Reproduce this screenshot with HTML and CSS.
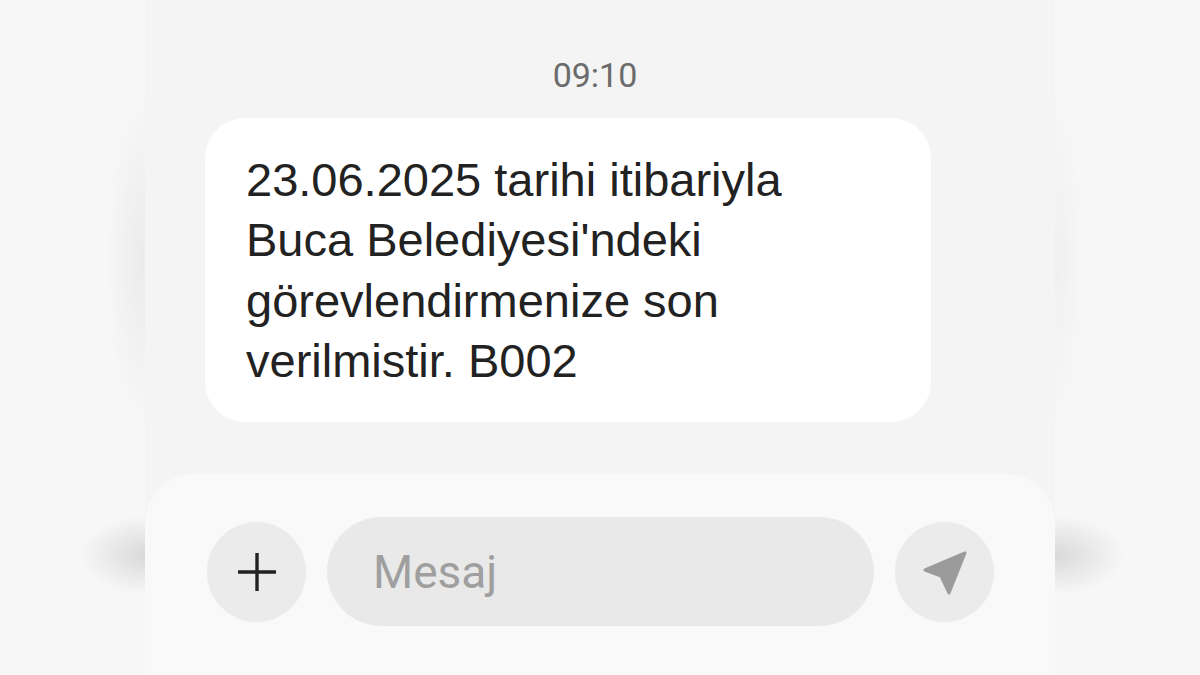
FILE: index.html
```html
<!DOCTYPE html>
<html lang="tr">
<head>
    <meta charset="UTF-8">
    <meta name="viewport" content="width=device-width, initial-scale=1.0">
    <title>Mesaj</title>
    <link rel="stylesheet" href="styles.css">
</head>
<body>
    <div class="frame">
        <div class="side side-left"></div>

        <div class="phone">
            <div class="time">09:10</div>

            <div class="bubble">
                <p>23.06.2025 tarihi itibariyla<br>
                Buca Belediyesi'ndeki<br>
                görevlendirmenize son<br>
                verilmistir. B002</p>
            </div>

            <div class="composer">
                <button class="round plus" type="button">
                    <svg width="44" height="44" viewBox="0 0 44 44">
                        <path d="M22 3v38M3 22h38" stroke="#222" stroke-width="3.4" fill="none"/>
                    </svg>
                </button>
                <div class="input">Mesaj</div>
                <button class="round send" type="button">
                    <svg width="46" height="46" viewBox="0 0 46 46">
                        <polygon points="43,4 3,21 19,27 27,44" fill="#9b9b9b" stroke="#9b9b9b" stroke-width="3" stroke-linejoin="round"/>
                    </svg>
                </button>
            </div>
        </div>

        <div class="side side-right"></div>
    </div>
</body>
</html>
```

FILE: styles.css
```css
body {
    margin: 0;
    background: #f6f6f6;
    font-family: Roboto, "Liberation Sans", sans-serif;
}

.frame {
    display: flex;
    width: 1200px;
    height: 675px;
    overflow: hidden;
}

.side {
    width: 145px;
    flex-shrink: 0;
    background-color: #f7f7f7;
}
.side-left {
    background-image:
        radial-gradient(ellipse 70px 40px at 150px 555px, rgba(0,0,0,0.13), transparent),
        radial-gradient(ellipse 40px 170px at 145px 260px, rgba(0,0,0,0.05), transparent);
}
.side-right {
    background-image:
        radial-gradient(ellipse 70px 40px at 0px 555px, rgba(0,0,0,0.12), transparent),
        radial-gradient(ellipse 30px 170px at 0px 260px, rgba(0,0,0,0.03), transparent);
}

.phone {
    width: 910px;
    flex-shrink: 0;
    background: #f4f4f4;
    display: flex;
    flex-direction: column;
}

.time {
    text-align: center;
    font-size: 34px;
    color: #6b6b6b;
    padding: 56px 10px 0 0;
    line-height: 38px;
}

.bubble {
    margin: 24px 0 0 60px;
    width: 726px;
    height: 304px;
    box-sizing: border-box;
    background: #fff;
    border-radius: 40px;
    padding: 32px 41px;
}
.bubble p {
    margin: 0;
    font-family: "Liberation Sans", Arial, sans-serif;
    font-size: 47px;
    line-height: 60.4px;
    color: #222;
}

.composer {
    margin-top: 52px;
    flex: 1;
    background: #f9f9f9;
    border-radius: 50px 50px 0 0;
    display: flex;
    align-items: center;
    gap: 21px;
    padding: 0 61px 6px 62px;
}

.round {
    width: 99px;
    height: 100px;
    border: none;
    border-radius: 50%;
    background: #ebebeb;
    display: flex;
    align-items: center;
    justify-content: center;
    padding: 0;
    flex-shrink: 0;
}

.input {
    flex: 1;
    height: 109px;
    background: #e9e9e9;
    border-radius: 55px;
    display: flex;
    align-items: center;
    padding-left: 46px;
    font-size: 46px;
    color: #9f9f9f;
}
```
